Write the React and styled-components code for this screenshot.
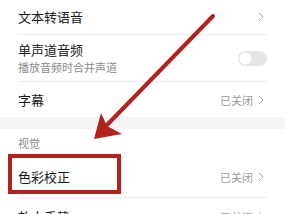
import React from "react";
import styled, { createGlobalStyle } from "styled-components";

const GlobalStyle = createGlobalStyle`
  html, body {
    margin: 0;
    padding: 0;
    background: #ffffff;
  }
  body {
    font-family: "Noto Sans CJK SC", "Noto Sans", sans-serif;
    color: #1f1f1f;
  }
`;

const Screen = styled.div`
  position: relative;
  width: 285px;
  height: 214px;
  overflow: hidden;
  background: #ffffff;
`;

const Group = styled.div`
  display: flex;
  flex-direction: column;
`;

const Row = styled.div`
  position: relative;
  display: flex;
  align-items: center;
  justify-content: space-between;
  height: ${(p) => p.h}px;
  margin: 0 18px;
  border-bottom: ${(p) => (p.divider ? "1px solid #ececec" : "none")};
  box-sizing: border-box;
`;

const TextCol = styled.div`
  display: flex;
  flex-direction: column;
  gap: ${(p) => p.gap || 0}px;
`;

const Title = styled.span`
  font-size: 13px;
  line-height: 16px;
  color: #1a1a1a;
`;

const Sub = styled.span`
  font-size: 11px;
  line-height: 13px;
  color: #8a8a8a;
`;

const Value = styled.div`
  display: flex;
  align-items: center;
  gap: 5px;
  font-size: 11px;
  color: #9a9a9a;
  margin-right: 3px;
`;

const Band = styled.div`
  height: 12px;
  background: #f4f4f4;
`;

const Header = styled.div`
  height: 28px;
  padding: 8px 18px 0;
  box-sizing: border-box;
  font-size: 11px;
  line-height: 13px;
  color: #8a8a8a;
`;

const Toggle = styled.div`
  position: relative;
  width: 29px;
  height: 15px;
  border-radius: 8px;
  background: #e6e6e6;

  &::after {
    content: "";
    position: absolute;
    left: 1px;
    top: 1px;
    width: 13px;
    height: 13px;
    border-radius: 50%;
    background: #ffffff;
    box-shadow: 0 0 1px rgba(0, 0, 0, 0.25);
  }
`;

const Highlight = styled.div`
  position: absolute;
  left: -10px;
  top: -3px;
  width: 113px;
  height: 40px;
  border: 4px solid #b3221d;
  box-sizing: border-box;
  pointer-events: none;
`;

const Overlay = styled.svg`
  position: absolute;
  left: 0;
  top: 0;
  pointer-events: none;
`;

const Chevron = () => (
  <svg width="6" height="10" viewBox="0 0 6 10">
    <polyline
      points="1,1 5,5 1,9"
      fill="none"
      stroke="#a8a8a8"
      strokeWidth="1"
    />
  </svg>
);

const App = () => {
  return (
    <>
      <GlobalStyle />
      <Screen>
        <Group>
          <Row h={35} divider>
            <Title>文本转语音</Title>
            <Value>
              <Chevron />
            </Value>
          </Row>
          <Row h={47} divider>
            <TextCol gap={3}>
              <Title>单声道音频</Title>
              <Sub>播放音频时合并声道</Sub>
            </TextCol>
            <Toggle />
          </Row>
          <Row h={35}>
            <Title>字幕</Title>
            <Value>
              已关闭
              <Chevron />
            </Value>
          </Row>
        </Group>
        <Band />
        <Header>视觉</Header>
        <Group>
          <Row h={41} divider>
            <Title>色彩校正</Title>
            <Value>
              已关闭
              <Chevron />
            </Value>
            <Highlight />
          </Row>
          <Row h={38}>
            <Title>放大手势</Title>
            <Value>
              已关闭
              <Chevron />
            </Value>
          </Row>
        </Group>
        <Overlay width="285" height="214" viewBox="0 0 285 214">
          <line
            x1="213"
            y1="16"
            x2="106"
            y2="126"
            stroke="#b3221d"
            strokeWidth="4"
            strokeLinecap="round"
          />
          <polygon points="94,139 101,113 107,126 122,134" fill="#b3221d" />
        </Overlay>
      </Screen>
    </>
  );
};

export default App;
